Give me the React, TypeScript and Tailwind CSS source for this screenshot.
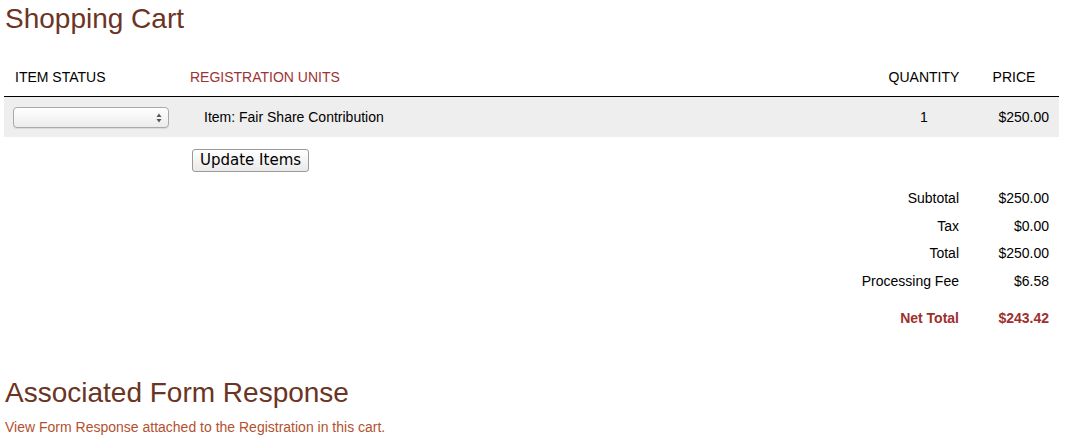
import React from "react";

const font = { fontFamily: '"Liberation Sans", Arial, Helvetica, sans-serif' };

export default function App() {
  return (
    <div className="w-[1066px] h-[445px] bg-white text-black overflow-hidden" style={font}>
      <h1 className="pl-[5px] pt-[3px] text-[28px] leading-[32px] text-[#6b3424] font-normal">Shopping Cart</h1>

      <div className="ml-[4px] w-[1055px] mt-[23px]">
        <div className="grid grid-cols-[182px_693px_90px_90px] h-[39px] pt-[1px] items-center text-[14px] border-b border-black">
          <div className="pl-[11px]">ITEM STATUS</div>
          <div className="pl-[4px] text-[#9b3434]">REGISTRATION UNITS</div>
          <div className="text-center">QUANTITY</div>
          <div className="text-center">PRICE</div>
        </div>
        <div className="grid grid-cols-[182px_693px_90px_90px] h-[40px] items-center bg-[#eeeeee] text-[14px]">
          <div className="pl-[9px]">
            <div className="relative w-[156px] h-[21px] rounded-[4px] border border-[#a9a9a9] bg-gradient-to-b from-white to-[#ececec] shadow-[0_1px_0_rgba(0,0,0,0.08)]">
              <svg className="absolute right-[6px] top-[5px]" width="6" height="10" viewBox="0 0 6 10">
                <path d="M3 0.5 L5.5 4 L0.5 4 Z" fill="#555" />
                <path d="M3 9.5 L5.5 6 L0.5 6 Z" fill="#555" />
              </svg>
            </div>
          </div>
          <div className="pl-[18px]">Item: Fair Share Contribution</div>
          <div className="text-center">1</div>
          <div className="text-right pr-[10px]">$250.00</div>
        </div>
        <div className="pl-[188px] pt-[11px]">
          <button
            className="h-[23px] px-[7px] rounded-[3px] border border-[#9a9a9a] bg-gradient-to-b from-white to-[#e9e9e9] text-[15px] leading-[20px] text-black"
            style={{ fontFamily: '"DejaVu Sans", Verdana, sans-serif' }}
          >
            Update Items
          </button>
        </div>
        <div className="mt-[13px] flex flex-col text-[14px]">
          {[
            ["Subtotal", "$250.00"],
            ["Tax", "$0.00"],
            ["Total", "$250.00"],
            ["Processing Fee", "$6.58"],
          ].map(([l, v]) => (
            <div key={l} className="flex justify-end h-[27.5px] items-center">
              <div className="text-right">{l}</div>
              <div className="w-[100px] text-right pr-[10px]">{v}</div>
            </div>
          ))}
          <div className="flex justify-end h-[27.5px] items-center mt-[10px] font-bold text-[#9e2f2f]">
            <div className="text-right">Net Total</div>
            <div className="w-[100px] text-right pr-[10px]">$243.42</div>
          </div>
        </div>
      </div>

      <h2 className="pl-[5px] mt-[44px] text-[28px] leading-[32px] text-[#6b3424] font-normal">Associated Form Response</h2>
      <p className="pl-[5px] mt-[8px] text-[14px] text-[#b3512f]">View Form Response attached to the Registration in this cart.</p>
    </div>
  );
}
